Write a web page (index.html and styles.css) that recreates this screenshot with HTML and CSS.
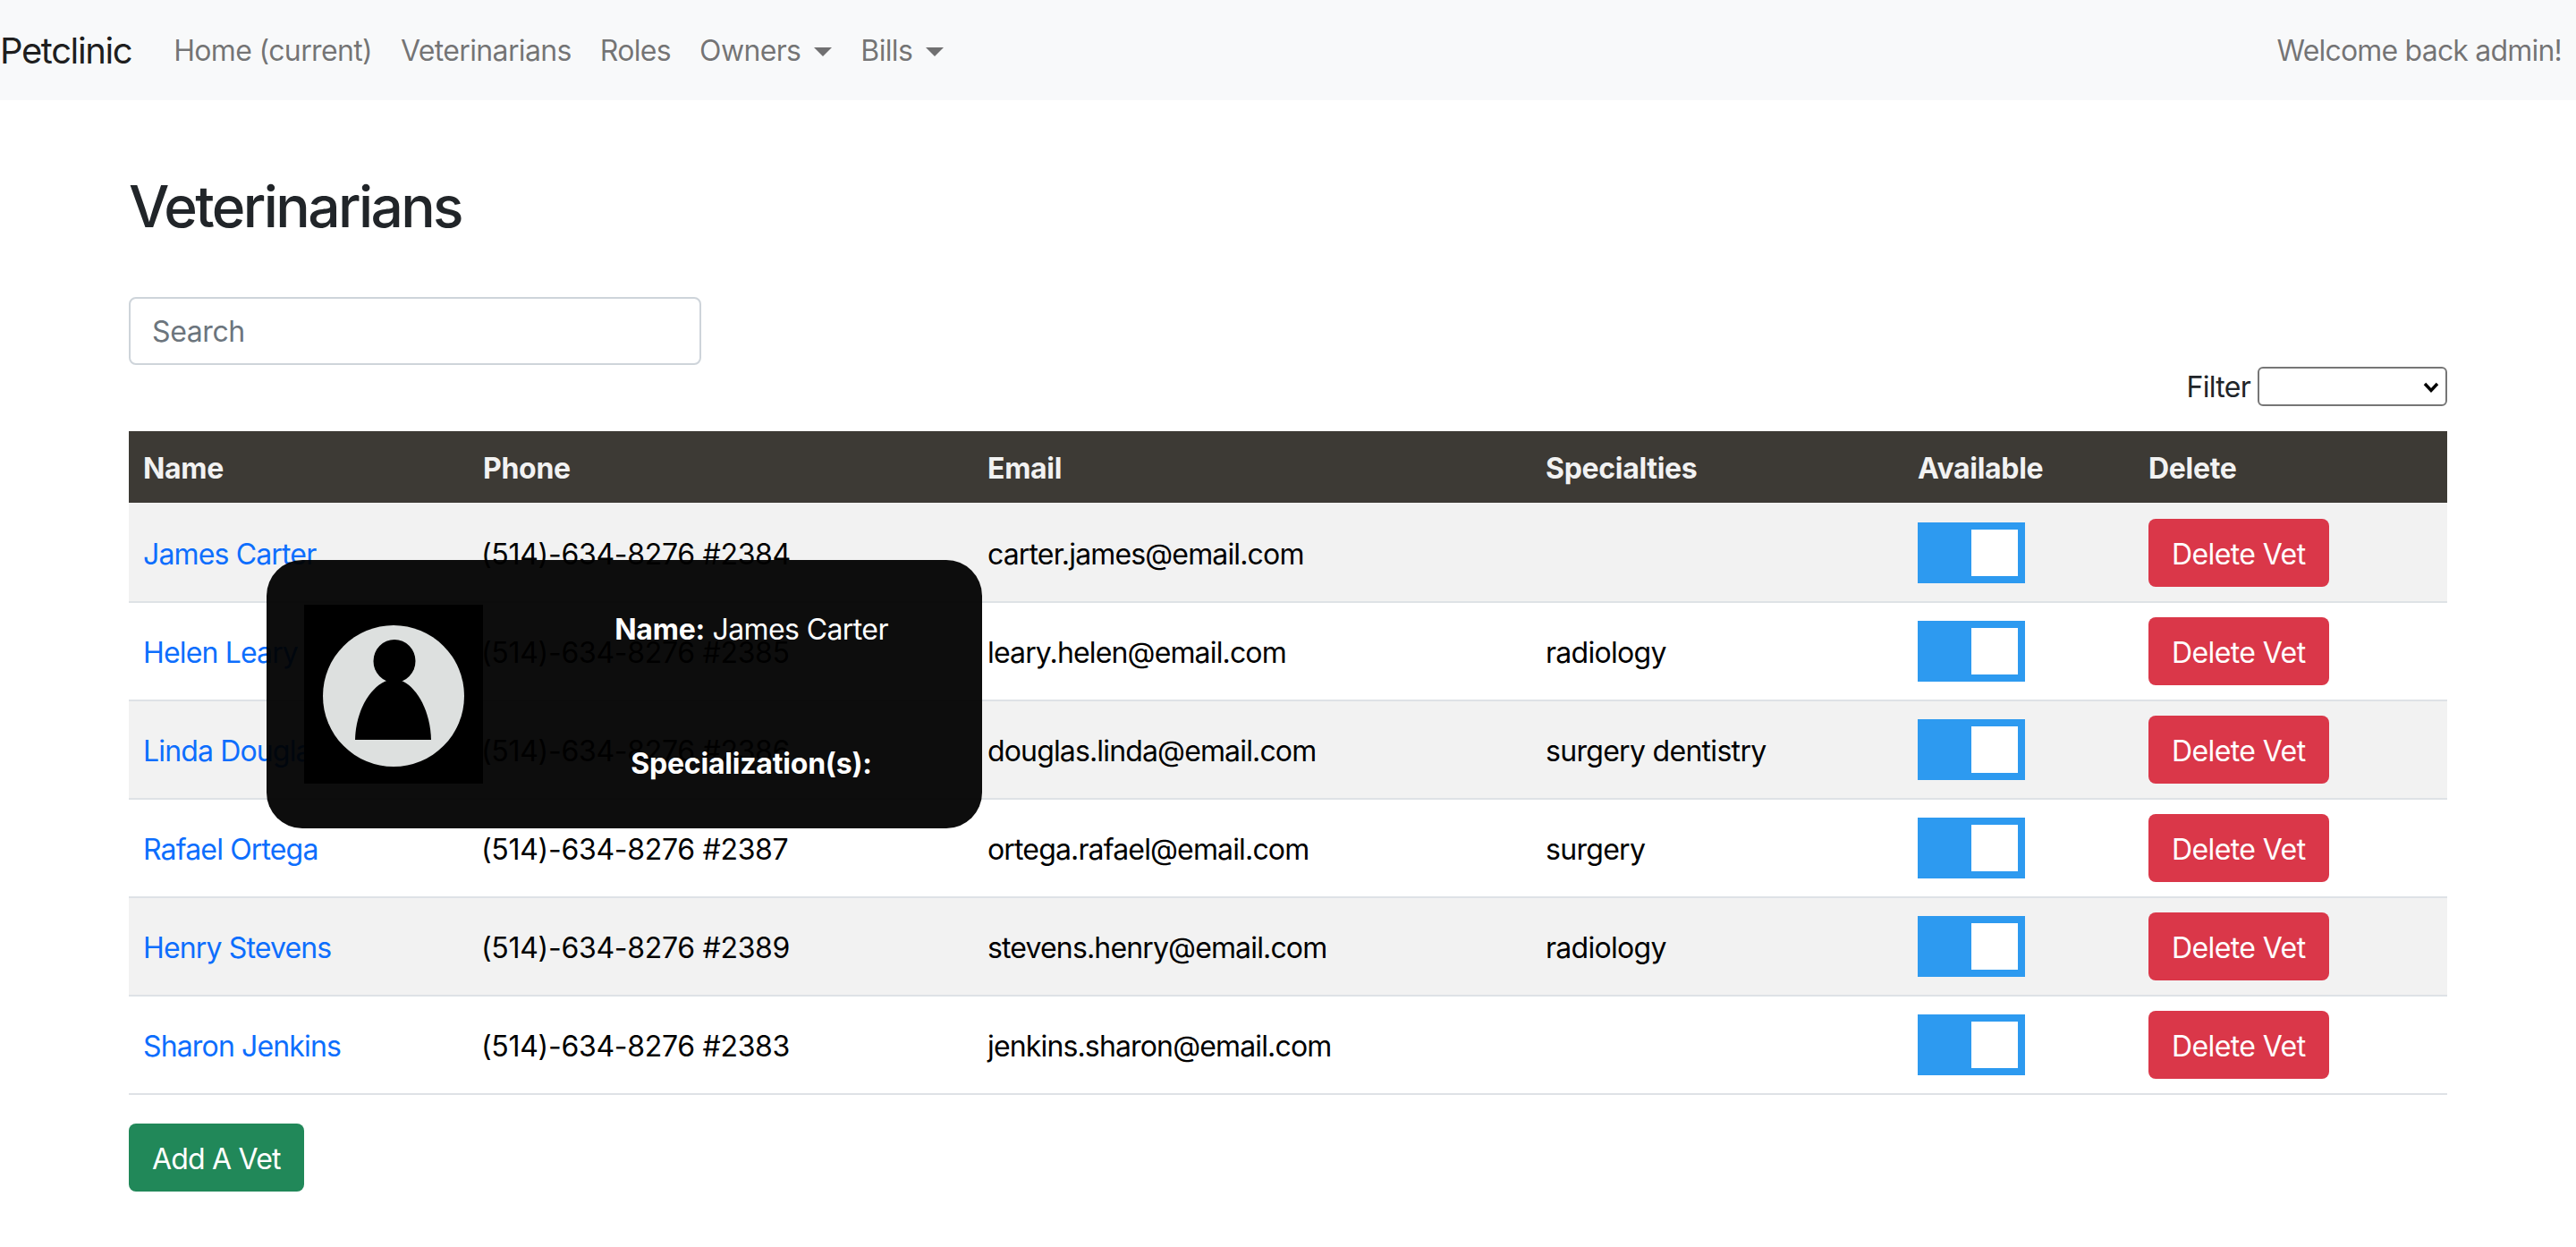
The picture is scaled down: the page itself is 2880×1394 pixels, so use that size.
FILE: index.html
```html
<!DOCTYPE html>
<html lang="en">
<head>
    <meta charset="UTF-8">
    <title>Veterinarians</title>
    <link rel="stylesheet" href="styles.css">
</head>
<body>
    <nav class="navbar">
        <a class="brand" href="#">Petclinic</a>
        <ul class="nav-links">
            <li><a href="#">Home (current)</a></li>
            <li><a href="#">Veterinarians</a></li>
            <li><a href="#">Roles</a></li>
            <li><a class="dropdown" href="#">Owners</a></li>
            <li><a class="dropdown" href="#">Bills</a></li>
        </ul>
        <span class="welcome">Welcome back admin!</span>
    </nav>

    <main class="content">
        <h2 class="title">Veterinarians</h2>
        <input class="search" type="text" placeholder="Search">
        <div class="filter">
            <label for="filter">Filter</label>
            <div class="select-wrap">
                <select id="filter"><option></option></select>
                <svg class="chevron" width="18" height="12" viewBox="0 0 18 12"><path d="M2 2l7 7.5L16 2" fill="none" stroke="#000" stroke-width="3.4"/></svg>
            </div>
        </div>

        <div class="table-wrap">
            <table class="vets">
                <colgroup>
                    <col class="col-name">
                    <col class="col-phone">
                    <col class="col-email">
                    <col class="col-spec">
                    <col class="col-avail">
                    <col class="col-delete">
                </colgroup>
                <thead>
                    <tr><th>Name</th><th>Phone</th><th>Email</th><th>Specialties</th><th>Available</th><th>Delete</th></tr>
                </thead>
                <tbody>
                    <tr>
                        <td><a href="#">James Carter</a></td>
                        <td class="phone">(514)-634-8276 #2384</td>
                        <td class="email">carter.james@email.com</td>
                        <td></td>
                        <td class="action"><span class="switch"></span></td>
                        <td class="action"><button class="btn btn-danger">Delete Vet</button></td>
                    </tr>
                    <tr>
                        <td><a href="#">Helen Leary</a></td>
                        <td class="phone">(514)-634-8276 #2385</td>
                        <td class="email">leary.helen@email.com</td>
                        <td>radiology</td>
                        <td class="action"><span class="switch"></span></td>
                        <td class="action"><button class="btn btn-danger">Delete Vet</button></td>
                    </tr>
                    <tr>
                        <td><a href="#">Linda Douglas</a></td>
                        <td class="phone">(514)-634-8276 #2386</td>
                        <td class="email">douglas.linda@email.com</td>
                        <td>surgery dentistry</td>
                        <td class="action"><span class="switch"></span></td>
                        <td class="action"><button class="btn btn-danger">Delete Vet</button></td>
                    </tr>
                    <tr>
                        <td><a href="#">Rafael Ortega</a></td>
                        <td class="phone">(514)-634-8276 #2387</td>
                        <td class="email">ortega.rafael@email.com</td>
                        <td>surgery</td>
                        <td class="action"><span class="switch"></span></td>
                        <td class="action"><button class="btn btn-danger">Delete Vet</button></td>
                    </tr>
                    <tr>
                        <td><a href="#">Henry Stevens</a></td>
                        <td class="phone">(514)-634-8276 #2389</td>
                        <td class="email">stevens.henry@email.com</td>
                        <td>radiology</td>
                        <td class="action"><span class="switch"></span></td>
                        <td class="action"><button class="btn btn-danger">Delete Vet</button></td>
                    </tr>
                    <tr>
                        <td><a href="#">Sharon Jenkins</a></td>
                        <td class="phone">(514)-634-8276 #2383</td>
                        <td class="email">jenkins.sharon@email.com</td>
                        <td></td>
                        <td class="action"><span class="switch"></span></td>
                        <td class="action"><button class="btn btn-danger">Delete Vet</button></td>
                    </tr>
                </tbody>
            </table>

            <div class="vet-card">
                <svg class="avatar" width="200" height="200" viewBox="0 0 200 200">
                    <rect width="200" height="200" fill="#000"/>
                    <ellipse cx="100" cy="102" rx="79" ry="79" fill="#dde0df"/>
                    <ellipse cx="101" cy="63" rx="23.5" ry="24" fill="#000"/>
                    <path d="M101 83C120 84 141 112 142 151H57C58 112 80 84 101 83Z" fill="#000"/>
                </svg>
                <div class="card-text">
                    <p><strong>Name:</strong> James Carter</p>
                    <p><strong>Specialization(s):</strong></p>
                </div>
            </div>
        </div>

        <button class="btn btn-success">Add A Vet</button>
    </main>
</body>
</html>
```

FILE: styles.css
```css
* {
    box-sizing: border-box;
}
body {
    margin: 0;
    font-family: Inter, "Liberation Sans", sans-serif;
    font-size: 32px;
    line-height: 48px;
    letter-spacing: -0.7px;
    color: #212529;
    background: #fff;
}
a {
    text-decoration: none;
}

.navbar {
    display: flex;
    align-items: center;
    height: 112px;
    padding: 2px 16px 0 0;
    background: #f8f9fa;
}
.brand {
    font-size: 40px;
    letter-spacing: -1.4px;
    color: rgba(0, 0, 0, 0.9);
    margin-right: 31px;
}
.nav-links {
    display: flex;
    flex: 1;
    margin: 0;
    padding: 0;
    list-style: none;
}
.nav-links a {
    display: block;
    padding: 0 16px;
    letter-spacing: -0.65px;
    color: rgba(0, 0, 0, 0.55);
}
.dropdown::after {
    content: "";
    display: inline-block;
    margin-left: 15px;
    vertical-align: 5px;
    border-top: 10px solid;
    border-left: 10px solid transparent;
    border-right: 10px solid transparent;
}
.welcome {
    letter-spacing: -0.8px;
    color: rgba(0, 0, 0, 0.55);
}

.content {
    padding: 80px 144px 0;
}
.title {
    margin: 0 0 63px;
    font-size: 64px;
    line-height: 77px;
    font-weight: 500;
    letter-spacing: -2.6px;
}
.search {
    display: block;
    width: 640px;
    height: 76px;
    padding: 12px 24px;
    font: inherit;
    letter-spacing: -0.4px;
    color: #212529;
    border: 2px solid #ced4da;
    border-radius: 8px;
}
.search::placeholder {
    color: #6c757d;
}

.filter {
    display: flex;
    justify-content: flex-end;
    align-items: center;
    gap: 8px;
    height: 48px;
    margin-bottom: 26px;
}
.filter label {
    padding-top: 2px;
}
.select-wrap {
    position: relative;
    width: 212px;
    height: 44px;
}
.select-wrap select {
    display: block;
    appearance: none;
    width: 100%;
    height: 100%;
    background: #fff;
    border: 2px solid #767676;
    border-radius: 6px;
}
.chevron {
    position: absolute;
    top: 17px;
    right: 9px;
    pointer-events: none;
}

.table-wrap {
    position: relative;
}
.vets {
    width: 100%;
    table-layout: fixed;
    border-collapse: separate;
    border-spacing: 0;
    margin-bottom: 32px;
}
.col-name { width: 380px; }
.col-phone { width: 564px; }
.col-email { width: 624px; }
.col-spec { width: 416px; }
.col-avail { width: 258px; }
.col-delete { width: 350px; }
.vets th {
    padding: 18px 16px 14px;
    text-align: left;
    font-weight: 700;
    letter-spacing: -0.3px;
    color: #f2f2f2;
    background: #3d3a35;
}
.vets td {
    padding: 18px 16px 14px;
    color: #000;
    vertical-align: middle;
    border-bottom: 2px solid #dee2e6;
}
.vets td a {
    color: #0d6efd;
    letter-spacing: -0.85px;
}
.vets td.phone {
    padding-left: 14px;
    letter-spacing: -0.3px;
}
.vets td.email {
    letter-spacing: -0.85px;
}
.vets td.action {
    padding: 16px;
}
.vets tbody tr:first-child td {
    padding-top: 20px;
}
.vets tbody tr:first-child td.action {
    padding-top: 18px;
}
.vets tbody tr:nth-child(odd) td {
    background: #f2f2f2;
}

.switch {
    position: relative;
    display: block;
    width: 120px;
    height: 68px;
    background: #2d9af0;
}
.switch::before {
    content: "";
    position: absolute;
    top: 8px;
    right: 8px;
    width: 52px;
    height: 52px;
    background: #fff;
}

.btn {
    display: inline-block;
    height: 76px;
    padding: 14px 24px 10px;
    font: inherit;
    letter-spacing: -0.6px;
    color: #fff;
    border: 2px solid transparent;
    border-radius: 8px;
}
.btn-danger {
    background: #da3749;
}
.btn-success {
    background: #218859;
    letter-spacing: -0.8px;
}

.vet-card {
    position: absolute;
    top: 144px;
    left: 154px;
    display: flex;
    width: 800px;
    height: 300px;
    padding: 50px 0 48px 42px;
    color: #fff;
    background: rgba(0, 0, 0, 0.95);
    border-radius: 40px;
}
.avatar {
    flex: none;
}
.card-text {
    display: flex;
    flex: 1;
    flex-direction: column;
    justify-content: space-between;
    margin-left: 42px;
    padding-top: 4px;
    text-align: center;
}
.card-text p {
    margin: 0;
    letter-spacing: -0.6px;
}
.card-text strong {
    font-weight: 700;
    letter-spacing: -0.2px;
}
```
